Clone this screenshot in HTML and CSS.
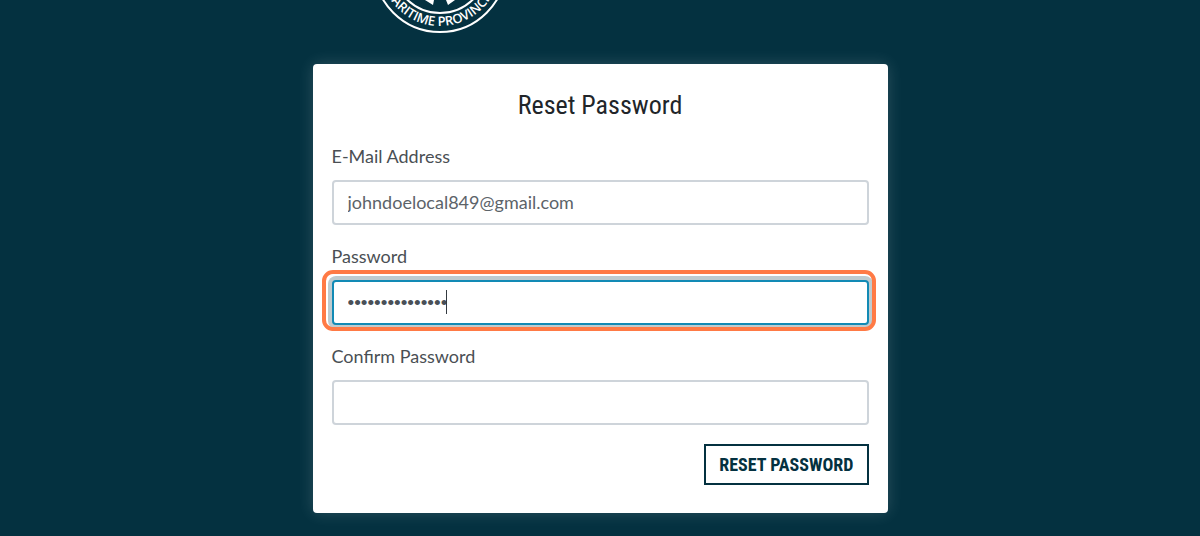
FILE: index.html
```html
<!DOCTYPE html>
<html lang="en">
<head>
  <meta charset="UTF-8" />
  <meta name="viewport" content="width=device-width, initial-scale=1" />
  <title>Reset Password</title>
  <link rel="stylesheet" href="styles.css">
</head>
<body>

  <!-- Lower part of the round seal -->
  <header>
    <svg class="seal" viewBox="0 102 136 34" role="img" aria-label="Maritime Provinces">
      <defs>
        <path id="seal-arc" d="M8 68 A60 60 0 0 0 128 68" />
      </defs>
      <circle cx="68" cy="68" r="66" fill="none" stroke="#fff" stroke-width="2" />
      <circle cx="68" cy="68" r="47" fill="none" stroke="#fff" stroke-width="2" />
      <path d="M53 102 L62 102 L61 107 Z M74 102 L83 102 L76 107 Z" fill="#fff" />
      <text class="seal-text"><textPath href="#seal-arc" startOffset="50%" text-anchor="middle">MARITIME PROVINCES</textPath></text>
    </svg>
  </header>

  <main class="container">
    <form class="card">
      <h1>Reset Password</h1>

      <div class="form-group">
        <label for="email">E-Mail Address</label>
        <input type="email" id="email" value="johndoelocal849@gmail.com" />
      </div>

      <div class="form-group">
        <label for="password">Password</label>
        <div class="highlight">
          <input type="password" id="password" class="active" value="abcdefghijklmno" />
          <span class="caret"></span>
        </div>
      </div>

      <div class="form-group">
        <label for="confirm">Confirm Password</label>
        <input type="password" id="confirm" />
      </div>

      <div class="actions">
        <button type="submit">Reset Password</button>
      </div>
    </form>
  </main>

</body>
</html>
```
FILE: styles.css
```css
* {
  box-sizing: border-box;
}

body {
  margin: 0;
  background: #043140;
  color: #4a4f54;
  font-family: Lato, sans-serif;
  font-size: 18px;
}

header {
  display: flex;
  justify-content: center;
  padding-right: 320px;
}

.seal {
  display: block;
  width: 136px;
}

.seal-text {
  fill: #fff;
  font-family: "Open Sans", sans-serif;
  font-size: 13px;
  font-weight: 600;
}

.container {
  max-width: 575px;
  margin: 30px auto 24px;
}

.card {
  padding: 24px 19px 28px;
  background: #fff;
  border-radius: 4px;
  box-shadow: 0 0 16px rgba(255, 255, 255, 0.16);
}

h1 {
  margin: 0 0 21px;
  color: #212529;
  font-family: "Roboto Condensed", "Liberation Sans Narrow", sans-serif;
  font-size: 26px;
  font-weight: 400;
  line-height: 35px;
  text-align: center;
}

.form-group {
  margin-bottom: 19px;
}

.form-group:last-of-type {
  margin-bottom: 18px;
}

label {
  display: block;
  margin-bottom: 12px;
  line-height: 24px;
}

input {
  display: block;
  width: 100%;
  height: 45px;
  padding: 0 14px 2px;
  border: 2px solid #ced4da;
  border-radius: 4px;
  background: #fff;
  color: #5c6369;
  font: inherit;
}

input[type="password"] {
  padding-bottom: 0;
  color: #495057;
  font-family: "Liberation Sans", Arial, sans-serif;
  font-size: 19px;
}

input.active {
  border-color: #128ab5;
  box-shadow: 0 0 0 4px #bfcbcf;
}

.highlight {
  position: relative;
}

.highlight::after {
  content: "";
  position: absolute;
  inset: -10px -7px -6px -10px;
  border: 4px solid #ff7a45;
  border-radius: 11px;
  pointer-events: none;
}

.caret {
  position: absolute;
  top: 10px;
  left: 114px;
  width: 1px;
  height: 24px;
  background: #343a40;
}

.actions {
  display: flex;
  justify-content: flex-end;
}

button {
  height: 41px;
  padding: 0 13px;
  border: 2px solid #043140;
  background: #fff;
  color: #043140;
  font-family: "Roboto Condensed", "Liberation Sans Narrow", sans-serif;
  font-size: 18px;
  font-weight: 700;
  text-transform: uppercase;
  cursor: pointer;
}
```
